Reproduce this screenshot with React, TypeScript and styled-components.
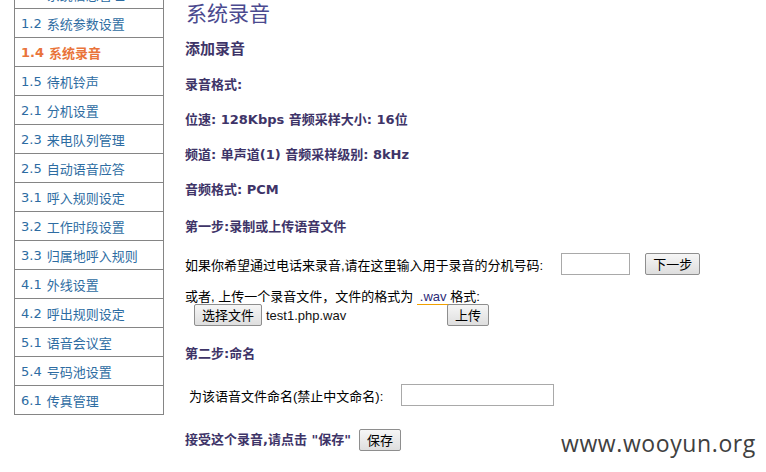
import React from "react";
import styled, { createGlobalStyle } from "styled-components";

const Global = createGlobalStyle`
  html, body { margin: 0; padding: 0; width: 766px; height: 472px; overflow: hidden; background: #fff; }
  body { font-family: "Liberation Sans", "Noto Sans CJK SC", sans-serif; }
`;

const Page = styled.div`
  position: relative;
  display: flex;
  align-items: flex-start;
  width: 766px;
  height: 472px;
  overflow: hidden;
`;

const Sidebar = styled.ul`
  list-style: none;
  margin: -20px 0 0 14px;
  padding: 0;
  width: 148px;
  border-left: 1px solid #858585;
  border-right: 1px solid #858585;
  flex: none;
`;

const NavItem = styled.li<{ $active?: boolean }>`
  height: 28px;
  border-bottom: 1px solid #858585;
  padding-left: 6px;
  display: flex;
  align-items: center;
  font-family: "DejaVu Sans", "Noto Sans CJK SC", sans-serif;
  font-size: 13px;
  font-weight: ${(p) => (p.$active ? 700 : 400)};
  color: ${(p) => (p.$active ? "#e9743b" : "#2d6ca2")};
  white-space: nowrap;
`;

const Num = styled.span`
  margin-right: 5px;
`;

const Main = styled.div`
  padding-left: 21px;
  display: flex;
  flex-direction: column;
  align-items: flex-start;
`;

const Title = styled.h1`
  margin: 0 0 0 1px;
  font-family: "Noto Sans CJK SC", sans-serif;
  font-size: 21px;
  line-height: 24px;
  font-weight: 400;
  color: #4b4a8f;
`;

const Heading = styled.h2`
  margin: 15px 0 0;
  font-family: "Noto Sans CJK SC", sans-serif;
  font-size: 15px;
  line-height: 18px;
  font-weight: 700;
  color: #3e3468;
`;

const Label = styled.div<{ $mt: number }>`
  margin-top: ${(p) => p.$mt}px;
  font-family: "DejaVu Sans", "Noto Sans CJK SC", sans-serif;
  font-size: 13px;
  line-height: 18px;
  font-weight: 700;
  color: #3e3468;
  white-space: nowrap;
`;

const Row = styled.div<{ $mt: number; $pl?: number }>`
  margin-top: ${(p) => p.$mt}px;
  padding-left: ${(p) => p.$pl ?? 0}px;
  display: flex;
  align-items: center;
  height: 22px;
  font-size: 13px;
  color: #000;
  white-space: nowrap;
`;

const Text = styled.div<{ $mt?: number }>`
  margin-top: ${(p) => p.$mt ?? 0}px;
  font-size: 13px;
  line-height: 16px;
  color: #000;
  white-space: nowrap;
`;

const Mark = styled.span`
  border-bottom: 1px solid #f0a000;
  padding-left: 3px;
`;

const Ext = styled.span`
  color: #2c2c78;
`;

const Input = styled.input<{ $w: number; $ml: number }>`
  box-sizing: border-box;
  width: ${(p) => p.$w}px;
  height: 22px;
  margin: 0 0 0 ${(p) => p.$ml}px;
  border: 1px solid #a9a9a9;
  background: #fff;
  padding: 0 3px;
  outline: none;
`;

const Button = styled.button<{ $w: number; $ml?: number }>`
  box-sizing: border-box;
  width: ${(p) => p.$w}px;
  height: 22px;
  margin: 0 0 0 ${(p) => p.$ml ?? 0}px;
  padding: 0;
  border: 1px solid #8e8e8e;
  border-radius: 2px;
  background: linear-gradient(#f6f6f6, #dedede);
  font-family: "Noto Sans CJK SC", sans-serif;
  font-size: 13px;
  line-height: 20px;
  color: #000;
`;

const FileField = styled.div`
  width: 253px;
  display: flex;
  align-items: center;
  gap: 4px;
`;

const FileName = styled.span`
  font-family: "Liberation Sans", sans-serif;
  font-size: 13px;
  color: #111;
`;

const Watermark = styled.div`
  position: absolute;
  left: 561px;
  top: 427px;
  font-family: "Open Sans", "Noto Sans", sans-serif;
  font-size: 23px;
  letter-spacing: 0.6px;
  color: #404040;
`;

const nav: [string, string][] = [
  ["1.1", "系统信息管理"],
  ["1.2", "系统参数设置"],
  ["1.4", "系统录音"],
  ["1.5", "待机铃声"],
  ["2.1", "分机设置"],
  ["2.3", "来电队列管理"],
  ["2.5", "自动语音应答"],
  ["3.1", "呼入规则设定"],
  ["3.2", "工作时段设置"],
  ["3.3", "归属地呼入规则"],
  ["4.1", "外线设置"],
  ["4.2", "呼出规则设定"],
  ["5.1", "语音会议室"],
  ["5.4", "号码池设置"],
  ["6.1", "传真管理"],
];

export default function App() {
  return (
    <>
      <Global />
      <Page>
        <Sidebar>
          {nav.map(([n, t]) => (
            <NavItem key={n} $active={n === "1.4"}>
              <Num>{n}</Num>
              {t}
            </NavItem>
          ))}
        </Sidebar>
        <Main>
          <Title>系统录音</Title>
          <Heading>添加录音</Heading>
          <Label $mt={19}>录音格式:</Label>
          <Label $mt={17}>位速: 128Kbps 音频采样大小: 16位</Label>
          <Label $mt={17}>频道: 单声道(1) 音频采样级别: 8kHz</Label>
          <Label $mt={17}>音频格式: PCM</Label>
          <Label $mt={19}>第一步:录制或上传语音文件</Label>
          <Row $mt={17}>
            如果你希望通过电话来录音,请在这里输入用于录音的分机号码:
            <Input $w={69} $ml={18} />
            <Button $w={55} $ml={15}>下一步</Button>
          </Row>
          <Text $mt={14}>
            或者, 上传一个录音文件，文件的格式为 <Mark><Ext>.wav</Ext> 格式:</Mark>
          </Text>
          <Row $mt={-1} $pl={9}>
            <FileField>
              <Button $w={68}>选择文件</Button>
              <FileName>test1.php.wav</FileName>
            </FileField>
            <Button $w={42}>上传</Button>
          </Row>
          <Label $mt={19}>第二步:命名</Label>
          <Row $mt={21} $pl={4}>
            为该语音文件命名(禁止中文命名):
            <Input $w={153} $ml={18} />
          </Row>
          <Row $mt={23}>
            <Label $mt={0}>接受这个录音,请点击 "保存"</Label>
            <Button $w={42} $ml={8}>保存</Button>
          </Row>
        </Main>
        <Watermark>www.wooyun.org</Watermark>
      </Page>
    </>
  );
}
